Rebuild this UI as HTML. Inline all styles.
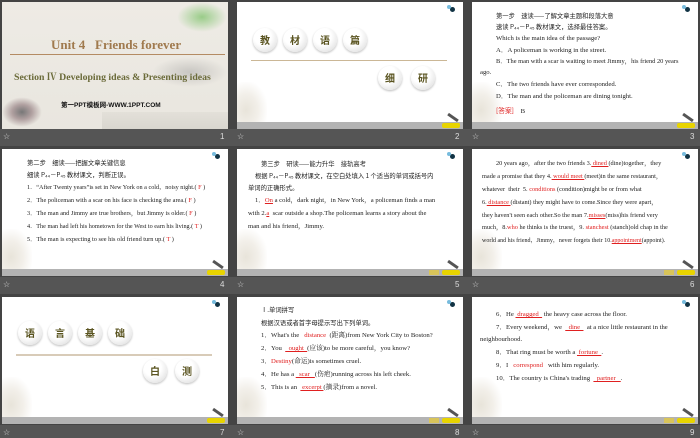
<!DOCTYPE html><html><head><meta charset="utf-8"><style>
*{margin:0;padding:0;box-sizing:border-box}
body{width:700px;height:438px;background:#444;position:relative;overflow:hidden;font-family:"Liberation Serif","Noto Serif CJK SC",serif}
.band{position:absolute;left:0;width:700px;height:17px;background:#555}
.s{position:absolute;width:226px;height:127px;background:#fff;overflow:hidden}
.bar{position:absolute;left:0;bottom:0;width:100%;height:7px;background:#b3b3b3}
.btn{position:absolute;right:3px;bottom:1px;width:18px;height:5px;background:#e8d400;border-radius:2px}
.btn2{position:absolute;right:24px;bottom:1px;width:10px;height:5px;background:#d8c45a}
.ic{position:absolute;right:8px;top:5px;width:5px;height:5px;border-radius:50%;background:#134}
.ic:before{content:"";position:absolute;left:-3px;top:-2px;width:4px;height:4px;border-radius:50%;background:#7bd}
.pen{position:absolute;right:4px;bottom:10px;width:12px;height:3px;background:#555;transform:rotate(35deg)}
.fl{position:absolute;left:0;bottom:7px;width:30px;height:40px;background:radial-gradient(ellipse at 30% 70%,#e8e4da 0,#f2efe9 40%,#fff 75%)}
.t{position:absolute;font-size:6.7px;color:#222;white-space:nowrap;line-height:1}
.r{color:#e02020}
.u{text-decoration:underline;color:#e02020}
.lab{position:absolute;font-size:8px;color:#ddd;font-family:"Liberation Sans",sans-serif}
.c{position:absolute;width:24px;height:24px;border-radius:50%;background:radial-gradient(circle at 40% 35%,#fff 40%,#e4e4e4 80%,#ccc);box-shadow:0 1px 2px #bbb;font-size:10px;color:#5a5420;text-align:center;line-height:24px;font-family:"Noto Sans CJK SC",sans-serif;font-weight:bold}
.hr{position:absolute;height:1px;background:#cbb796}
.s6 .t{font-size:6.3px}
</style></head><body>
<div class="band" style="top:129px"></div><div class="band" style="top:277px"></div><div class="band" style="top:425px;height:13px"></div>

<!-- slide 1 -->
<div class="s" style="left:2px;top:2px;background:linear-gradient(#eeebe5,#e9e6df)">
<div style="position:absolute;left:175px;top:0;width:50px;height:30px;background:radial-gradient(ellipse,#9c8 0,rgba(230,230,220,0) 70%)"></div>
<div class="t" style="left:49px;top:36px;font-size:13px;font-weight:bold;color:#a07a4e">Unit 4&nbsp;&nbsp;&nbsp;Friends forever</div>
<div class="hr" style="left:8px;top:52px;width:215px;background:#b48b63"></div>
<div style="position:absolute;left:150px;top:55px;width:76px;height:30px;background:radial-gradient(ellipse,#c8c6c2 0,rgba(233,230,223,0) 70%)"></div>
<div class="t" style="left:12px;top:71px;font-size:9.8px;font-weight:bold;color:#6b6b3a">Section Ⅳ Developing ideas &amp; Presenting ideas</div>
<div class="t" style="left:59px;top:101px;font-size:6.5px;font-weight:bold;color:#111;font-family:'Liberation Sans','Noto Sans CJK SC',sans-serif">第一PPT模板网-WWW.1PPT.COM</div>
<div style="position:absolute;left:0;top:95px;width:40px;height:30px;background:radial-gradient(ellipse,#777 0,#b0a0a0 35%,rgba(233,230,223,0) 70%)"></div>
<div style="position:absolute;left:100px;top:110px;width:126px;height:17px;background:linear-gradient(#e3e0d9,#d9d6cf)"></div>
</div>
<div class="lab" style="left:3px;top:132px">☆</div><div class="lab" style="left:220px;top:132px">1</div>

<!-- slide 2 -->
<div class="s" style="left:237px;top:2px"><div class="ic"></div><div class="fl"></div><div class="pen"></div><div class="bar"></div><div class="btn"></div>
<div class="c" style="left:16px;top:26px">教</div><div class="c" style="left:46px;top:26px">材</div><div class="c" style="left:76px;top:26px">语</div><div class="c" style="left:106px;top:26px">篇</div>
<div class="hr" style="left:14px;top:58px;width:196px"></div>
<div class="c" style="left:141px;top:64px">细</div><div class="c" style="left:174px;top:64px">研</div>
</div>
<div class="lab" style="left:237px;top:132px">☆</div><div class="lab" style="left:455px;top:132px">2</div>

<!-- slide 3 -->
<div class="s" style="left:472px;top:2px"><div class="ic"></div><div class="fl"></div><div class="pen"></div><div class="bar"></div><div class="btn"></div>
<div class="t" style="left:24px;top:11px;font-family:'Noto Sans CJK SC',sans-serif;font-size:6.3px">第一步　速读——了解文章主题和段落大意</div>
<div class="t" style="left:24px;top:22px;font-family:'Noto Sans CJK SC',sans-serif;font-size:6.3px">速读 P₄₄－P₄₅ 教材课文，选择最佳答案。</div>
<div class="t" style="left:24px;top:34px">Which is the main idea of the passage?</div>
<div class="t" style="left:24px;top:46px">A．A policeman is working in the street.</div>
<div class="t" style="left:24px;top:57px;font-size:6.4px">B．The man with a scar is waiting to meet Jimmy，his friend 20 years</div>
<div class="t" style="left:8px;top:68px">ago.</div>
<div class="t" style="left:24px;top:80px">C．The two friends have ever corresponded.</div>
<div class="t" style="left:24px;top:92px">D．The man and the policeman are dining tonight.</div>
<div class="t" style="left:24px;top:105px"><span class="r" style="font-family:'Noto Sans CJK SC'">[答案]</span>　B</div>
</div>
<div class="lab" style="left:472px;top:132px">☆</div><div class="lab" style="left:690px;top:132px">3</div>

<!-- slide 4 -->
<div class="s" style="left:2px;top:149px"><div class="ic"></div><div class="fl"></div><div class="pen"></div><div class="bar"></div><div class="btn"></div>
<div class="t" style="left:25px;top:11px;font-family:'Noto Sans CJK SC',sans-serif;font-size:6.3px">第二步　细读——把握文章关键信息</div>
<div class="t" style="left:25px;top:23px;font-family:'Noto Sans CJK SC',sans-serif;font-size:6.3px">细读 P₄₄－P₄₅ 教材课文，判断正误。</div>
<div class="t" style="left:25px;top:36px;font-size:6.2px">1．“After Twenty years”is set in New York on a cold，noisy night.( <span class="r">F</span> )</div>
<div class="t" style="left:25px;top:49px;font-size:6.3px">2．The policeman with a scar on his face is checking the area.( <span class="r">F</span> )</div>
<div class="t" style="left:25px;top:62px;font-size:6.3px">3．The man and Jimmy are true brothers，but Jimmy is older.( <span class="r">F</span> )</div>
<div class="t" style="left:25px;top:75px;font-size:6.2px">4．The man had left his hometown for the West to earn his living.( <span class="r">T</span> )</div>
<div class="t" style="left:25px;top:88px;font-size:6.3px">5．The man is expecting to see his old friend turn up.( <span class="r">T</span> )</div>
</div>
<div class="lab" style="left:3px;top:280px">☆</div><div class="lab" style="left:220px;top:280px">4</div>

<!-- slide 5 -->
<div class="s" style="left:237px;top:149px"><div class="ic"></div><div class="fl"></div><div class="pen"></div><div class="bar"></div><div class="btn"></div><div class="btn2"></div>
<div class="t" style="left:24px;top:12px;font-family:'Noto Sans CJK SC',sans-serif;font-size:6.3px">第三步　研读——能力升华　接轨高考</div>
<div class="t" style="left:18px;top:24px;font-family:'Noto Sans CJK SC',sans-serif;font-size:6.3px">根据 P₄₄－P₄₅ 教材课文，在空白处填入 1 个适当的单词或括号内</div>
<div class="t" style="left:11px;top:36px;font-family:'Noto Sans CJK SC',sans-serif;font-size:6.3px">单词的正确形式。</div>
<div class="t" style="left:18px;top:49px;font-size:6.6px">1．<span class="u">On</span> a cold，dark night，in New York，a policeman finds a man</div>
<div class="t" style="left:11px;top:62px;font-size:6.6px">with 2.<span class="u">a</span>&nbsp; scar outside a shop.The policeman learns a story about the</div>
<div class="t" style="left:11px;top:75px">man and his friend，Jimmy.</div>
</div>
<div class="lab" style="left:237px;top:280px">☆</div><div class="lab" style="left:455px;top:280px">5</div>

<!-- slide 6 -->
<div class="s s6" style="left:472px;top:149px"><div class="ic"></div><div class="fl"></div><div class="pen"></div><div class="bar"></div><div class="btn"></div><div class="btn2"></div>
<div class="t" style="left:24px;top:12px">20 years ago，after the two friends 3.<span class="u">&nbsp;dined&nbsp;</span>(dine)together，they</div>
<div class="t" style="left:10px;top:25px">made a promise that they 4.<span class="u">&nbsp;would meet&nbsp;</span>(meet)in the same restaurant，</div>
<div class="t" style="left:10px;top:38px">whatever&nbsp; their&nbsp; 5. <span class="r">conditions</span> (condition)might be or from what</div>
<div class="t" style="left:10px;top:51px">6.<span class="u">&nbsp;distance&nbsp;</span>(distant) they might have to come.Since they were apart，</div>
<div class="t" style="left:10px;top:64px">they haven't seen each other.So the man 7.<span class="u">misses</span>(miss)his friend very</div>
<div class="t" style="left:10px;top:76px">much，8.<span class="r">who</span> he thinks is the truest，9. <span class="r">stanchest</span> (stanch)old chap in the</div>
<div class="t" style="left:10px;top:89px;font-size:6px">world and his friend，Jimmy，never forgets their 10.<span class="u">appointment</span>(appoint).</div>
</div>
<div class="lab" style="left:472px;top:280px">☆</div><div class="lab" style="left:690px;top:280px">6</div>

<!-- slide 7 -->
<div class="s" style="left:2px;top:297px"><div class="ic"></div><div class="fl"></div><div class="pen"></div><div class="bar"></div><div class="btn"></div>
<div class="c" style="left:16px;top:24px">语</div><div class="c" style="left:46px;top:24px">言</div><div class="c" style="left:76px;top:24px">基</div><div class="c" style="left:106px;top:24px">础</div>
<div class="hr" style="left:14px;top:57px;width:196px;height:2px;background:#d8cbb8"></div>
<div class="c" style="left:141px;top:62px">白</div><div class="c" style="left:173px;top:62px">测</div>
</div>
<div class="lab" style="left:3px;top:428px">☆</div><div class="lab" style="left:220px;top:428px">7</div>

<!-- slide 8 -->
<div class="s" style="left:237px;top:297px"><div class="ic"></div><div class="fl"></div><div class="pen"></div><div class="bar"></div><div class="btn"></div><div class="btn2"></div>
<div class="t" style="left:24px;top:10px;font-family:'Noto Sans CJK SC',sans-serif;font-size:6.3px">Ⅰ.单词拼写</div>
<div class="t" style="left:24px;top:23px;font-family:'Noto Sans CJK SC',sans-serif;font-size:6.3px">根据汉语或者首字母提示写出下列单词。</div>
<div class="t" style="left:24px;top:36px">1．What's the&nbsp;&nbsp;&nbsp;<span class="r">distance</span>&nbsp;&nbsp;(距离)from New York City to Boston?</div>
<div class="t" style="left:24px;top:49px">2．You&nbsp;&nbsp;<span class="u">&nbsp;&nbsp;ought&nbsp;&nbsp;</span>(应该)to be more careful，you know?</div>
<div class="t" style="left:24px;top:62px">3．<span class="r">Destiny</span>(命运)is sometimes cruel.</div>
<div class="t" style="left:24px;top:75px">4．He has a <span class="u">&nbsp;&nbsp;scar&nbsp;&nbsp;&nbsp;</span>(伤疤)running across his left cheek.</div>
<div class="t" style="left:24px;top:88px">5．This is an&nbsp; <span class="u">&nbsp;excerpt&nbsp;</span>(摘录)from a novel.</div>
</div>
<div class="lab" style="left:237px;top:428px">☆</div><div class="lab" style="left:455px;top:428px">8</div>

<!-- slide 9 -->
<div class="s" style="left:472px;top:297px"><div class="ic"></div><div class="fl"></div><div class="pen"></div><div class="bar"></div><div class="btn"></div><div class="btn2"></div>
<div class="t" style="left:24px;top:15px">6．He <span class="u">&nbsp;dragged&nbsp;&nbsp;</span> the heavy case across the floor.</div>
<div class="t" style="left:24px;top:28px">7．Every weekend，we&nbsp; <span class="u">&nbsp;&nbsp;dine&nbsp;&nbsp;</span>&nbsp; at a nice little restaurant in the</div>
<div class="t" style="left:8px;top:40px">neighbourhood.</div>
<div class="t" style="left:24px;top:53px">8．That ring must be worth a <span class="u">&nbsp;fortune&nbsp;&nbsp;</span>.</div>
<div class="t" style="left:24px;top:66px">9．I&nbsp;&nbsp;&nbsp;<span class="r">correspond</span>&nbsp;&nbsp;&nbsp;with him regularly.</div>
<div class="t" style="left:24px;top:79px">10．The country is China's trading&nbsp; <span class="u">&nbsp;&nbsp;partner&nbsp;&nbsp;&nbsp;</span>.</div>
</div>
<div class="lab" style="left:472px;top:428px">☆</div><div class="lab" style="left:690px;top:428px">9</div>
</body></html>
